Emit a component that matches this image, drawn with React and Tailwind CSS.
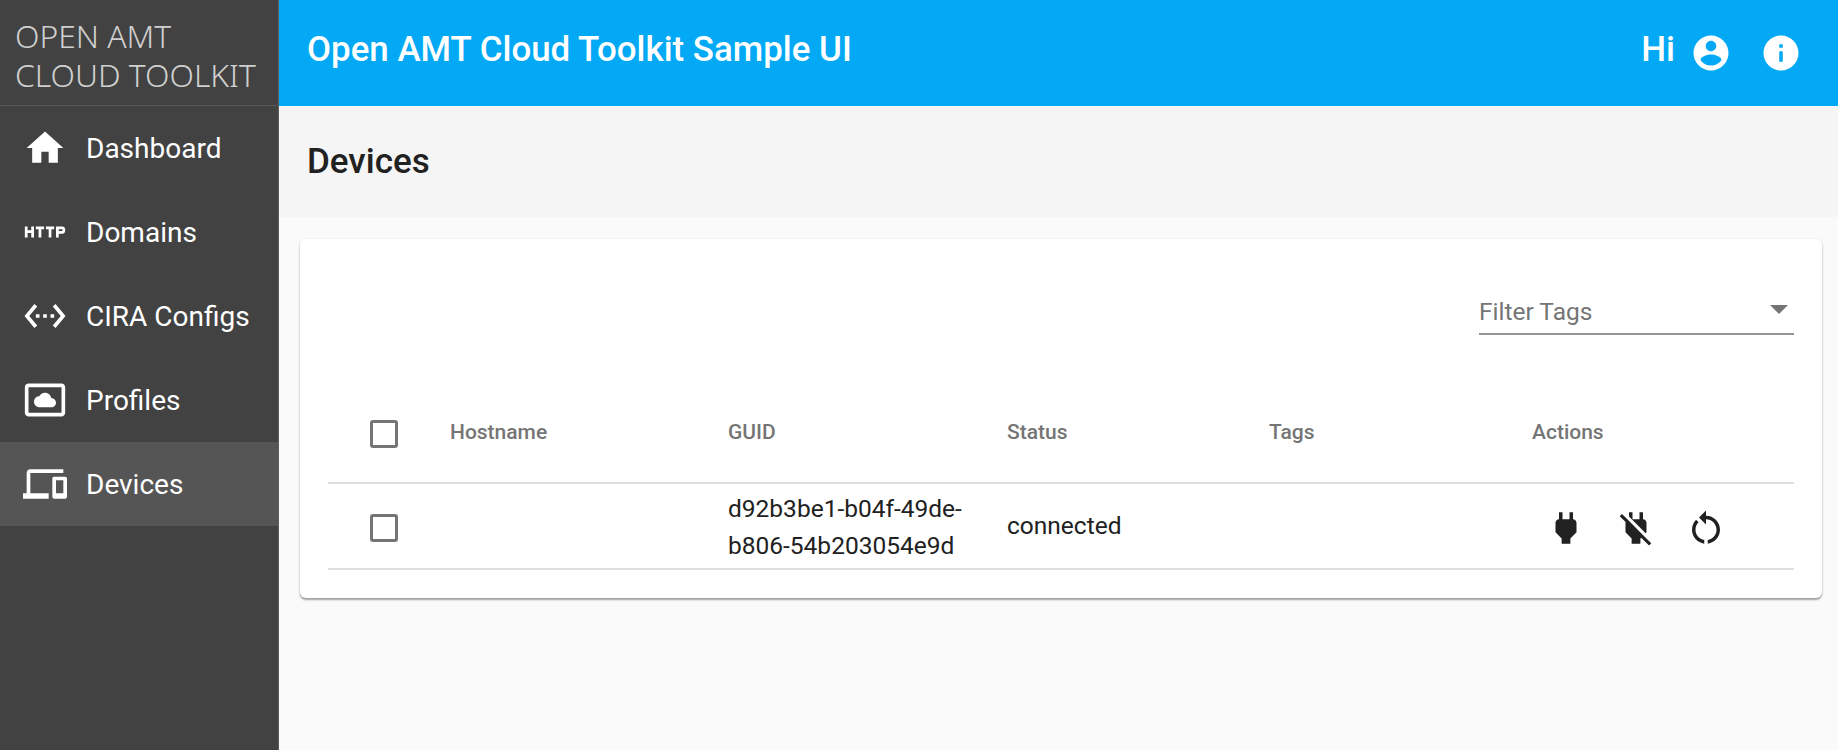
import React from "react";

const navItems = [
  { label: "Dashboard", path: "M10 20v-6h4v6h5v-8h3L12 3 2 12h3v8z" },
  { label: "Domains", path: "M4.5 11h-2V9H1v6h1.5v-2.5h2V15H6V9H4.5v2zm2.5-.5h1.5V15H10v-4.5h1.5V9H7v1.5zm5.5 0H14V15h1.5v-4.5H17V9h-4.5v1.5zm9-1.5H18v6h1.5v-2h2c.8 0 1.5-.7 1.5-1.5v-1c0-.8-.7-1.5-1.5-1.5zm0 2.5h-2v-1h2v1z" },
  { label: "CIRA Configs", path: "M7.77 6.76L6.23 5.48.82 12l5.41 6.52 1.54-1.28L3.42 12l4.35-5.24zM7 13h2v-2H7v2zm10-2h-2v2h2v-2zm-6 2h2v-2h-2v2zm6.77-7.52l-1.54 1.28L20.58 12l-4.35 5.24 1.54 1.28L23.18 12l-5.41-6.52z" },
  { label: "Profiles", path: "M9 16h6.5c1.38 0 2.5-1.12 2.5-2.5S16.88 11 15.5 11h-.05c-.24-1.69-1.69-3-3.45-3-1.4 0-2.6.83-3.16 2.02h-.16C7.17 10.18 6 11.45 6 13c0 1.66 1.34 3 3 3zM21 3H3c-1.1 0-2 .9-2 2v14c0 1.1.9 2 2 2h18c1.1 0 2-.9 2-2V5c0-1.1-.9-2-2-2zm0 16.01H3V4.99h18v14.02z" },
  { label: "Devices", active: true, path: "M4 6h18V4H4c-1.1 0-2 .9-2 2v11H0v3h14v-3H4V6zm19 2h-6c-.55 0-1 .45-1 1v10c0 .55.45 1 1 1h6c.55 0 1-.45 1-1V9c0-.55-.45-1-1-1zm-1 9h-4v-7h4v7z" },
];

const Icon = ({ d, className }) => (
  <svg viewBox="0 0 24 24" fill="currentColor" className={className}>
    <path d={d} />
  </svg>
);

const Checkbox = () => (
  <div className="w-[28px] h-[28px] rounded-[3px] border-[3px] border-[#757575]" />
);

const Sidebar = () => (
  <aside className="w-[279px] shrink-0 bg-[#424242] border-r border-[#5c5c5c] flex flex-col">
    <div className="h-[106px] border-b border-[#565656] pt-[16px] pl-[15px] font-['Noto_Sans'] font-light text-[#d0d0d0] text-[31.8px] leading-[39px] whitespace-nowrap">
      <div>OPEN AMT</div>
      <div>CLOUD TOOLKIT</div>
    </div>
    <nav className="flex flex-col">
      {navItems.map((item) => (
        <div
          key={item.label}
          className={`h-[84px] flex items-center pl-[23px] gap-[19px] text-white text-[28px] ${
            item.active ? "bg-[#555555]" : ""
          }`}
        >
          <Icon d={item.path} className="w-[44px] h-[44px] shrink-0" />
          <span className="pt-[2px]">{item.label}</span>
        </div>
      ))}
    </nav>
  </aside>
);

const columns = "grid grid-cols-[122px_278px_279px_262px_263px_262px] items-center";

export default function App() {
  return (
    <div className="flex w-[1838px] h-[750px] overflow-hidden font-['Roboto'] bg-[#fafafa]">
      <Sidebar />
      <main className="flex-1 flex flex-col min-w-0">
        <header className="h-[106px] shrink-0 bg-[#03a9f4] text-white flex items-center justify-between pl-[28px] pr-[36px]">
          <span className="text-[34.9px] font-medium pb-[6px]">Open AMT Cloud Toolkit Sample UI</span>
          <div className="flex items-center">
            <span className="text-[35px] font-medium mr-[15px] pb-[6px]">Hi</span>
            <Icon
              d="M12 2C6.48 2 2 6.48 2 12s4.48 10 10 10 10-4.48 10-10S17.52 2 12 2zm0 3c1.66 0 3 1.34 3 3s-1.34 3-3 3-3-1.34-3-3 1.34-3 3-3zm0 14.2c-2.5 0-4.71-1.28-6-3.22.03-1.99 4-3.08 6-3.08 1.99 0 5.97 1.09 6 3.08-1.29 1.94-3.5 3.22-6 3.22z"
              className="w-[42px] h-[42px]"
            />
            <Icon
              d="M12 2C6.48 2 2 6.48 2 12s4.48 10 10 10 10-4.48 10-10S17.52 2 12 2zm1 15h-2v-6h2v6zm0-8h-2V7h2v2z"
              className="w-[42px] h-[42px] ml-[28px]"
            />
          </div>
        </header>

        <div className="h-[111px] shrink-0 bg-[#f5f5f5] flex items-center pl-[28px]">
          <h1 className="text-[35px] font-medium text-[#212121] pt-[1px]">Devices</h1>
        </div>

        <section className="mt-[22px] ml-[21px] w-[1522px] h-[359px] bg-white rounded-[6px] shadow-[0_2px_2px_rgba(0,0,0,0.35),0_0_3px_rgba(0,0,0,0.08)] px-[28px] flex flex-col">
          <div className="flex justify-end pt-[46px]">
            <div className="w-[315px] h-[50px] border-b-2 border-[#949494] flex items-center justify-between pr-[6px] text-[24.5px] text-[#757575]">
              <span className="pt-[6px]">Filter Tags</span>
              <div className="w-0 h-0 border-x-[9px] border-x-transparent border-t-[9px] border-t-[#757575]" />
            </div>
          </div>

          <div className={`${columns} mt-[49px] h-[100px] border-b-2 border-[#e0e0e0] text-[21px] font-medium text-[#757575]`}>
            <div className="pl-[42px] pt-[2px]"><Checkbox /></div>
            <span>Hostname</span>
            <span>GUID</span>
            <span>Status</span>
            <span>Tags</span>
            <span>Actions</span>
          </div>

          <div className={`${columns} h-[86px] pt-[2px] border-b-2 border-[#e0e0e0] text-[24.5px] text-[#212121]`}>
            <div className="pl-[42px] pt-[2px]"><Checkbox /></div>
            <span />
            <span className="leading-[37.5px] pr-[40px]">d92b3be1-b04f-49de-b806-54b203054e9d</span>
            <span className="pb-[2px]">connected</span>
            <span />
            <div className="flex items-center text-[#212121] pl-[13px] pt-[2px] gap-[28px]">
              <Icon d="M16.01 7L16 3h-2v4h-4V3H8v4h-.01C7 6.99 6 7.99 6 8.99v5.49L9.5 18v3h5v-3l3.5-3.51v-5.5c0-1-1-2-1.99-1.99z" className="w-[42px] h-[42px]" />
              <Icon d="M18 14.49V9c0-1-1.01-2.01-2-2V3h-2v4h-4V3H8v2.48l9.51 9.5.49-.49zm-1.76 1.77L7.2 7.2l-.01.01L3.98 4 2.71 5.25l3.36 3.36C6.04 8.74 6 8.87 6 9v5.48L9.5 18v3h5v-3l.48-.48L19.45 22l1.26-1.28-4.47-4.46z" className="w-[42px] h-[42px]" />
              <Icon d="M12 5V2L8 6l4 4V7c3.31 0 6 2.69 6 6 0 2.97-2.17 5.43-5 5.91v2.02c3.95-.49 7-3.85 7-7.93 0-4.42-3.58-8-8-8zm-6 8c0-1.65.67-3.15 1.76-4.24L6.34 7.34C4.9 8.79 4 10.79 4 13c0 4.08 3.05 7.44 7 7.93v-2.02c-2.83-.48-5-2.94-5-5.91z" className="w-[42px] h-[42px]" />
            </div>
          </div>
        </section>
      </main>
    </div>
  );
}
